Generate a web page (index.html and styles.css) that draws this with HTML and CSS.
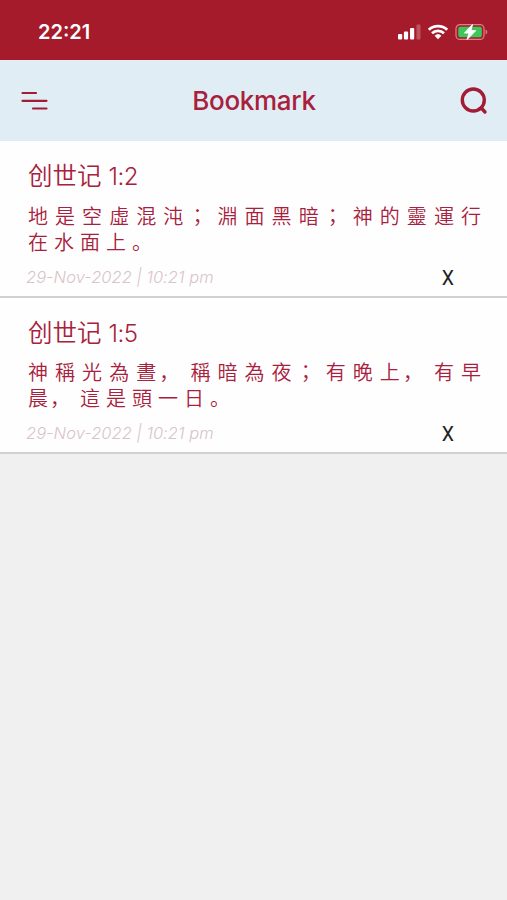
FILE: index.html
```html
<!DOCTYPE html>
<html lang="zh-Hans">
<head>
<meta charset="utf-8">
<title>Bookmark</title>
<link rel="stylesheet" href="styles.css">
</head>
<body>
<div class="status">
  <span class="time">22:21</span>
  <svg class="status-icons" width="92" height="20" viewBox="0 0 92 20">
    <g fill="#fff">
      <rect x="0" y="12" width="4.200" height="5.500" rx="1"/>
      <rect x="5.900" y="9.500" width="4.200" height="8" rx="1"/>
      <rect x="12" y="6" width="4.200" height="11.500" rx="1"/>
      <rect x="18.500" y="2.500" width="4" height="15" rx="1" opacity=".25"/>
      <path d="M36.600 13.700a5 5 0 0 1 6.800 0L40 17.300z"/>
    </g>
    <g fill="none" stroke="#fff" stroke-width="2.800">
      <path d="M30.800 7.700a13.500 13.500 0 0 1 18.400 0"/>
      <path d="M34 11.200a9 9 0 0 1 12 0"/>
    </g>
    <rect x="58" y="2.600" width="28" height="14.800" rx="4" fill="none" stroke="#d5838a" stroke-width="1.200"/>
    <path d="M87.600 7.500c2.200.8 2.200 4.200 0 5z" fill="#d5838a"/>
    <rect x="60.300" y="4.800" width="23.500" height="10.400" rx="2" fill="#3fc65a"/>
    <path d="M74.500 2.500l-8 8.500h4.600l-2 6.500 8.600-8.800h-4.800z" fill="#fff" stroke="#fff" stroke-width="1" stroke-linejoin="round"/>
  </svg>
</div>
<header class="header">
  <svg class="menu" width="28" height="20" viewBox="0 0 28 20" stroke="#a21c36" stroke-width="2.200" stroke-linecap="round">
    <path d="M2.500 2h13.500M2.500 9.800h24M13 17.500H26.500"/>
  </svg>
  <h1 class="title">Bookmark</h1>
  <svg class="search" width="28" height="28" viewBox="0 0 28 28" fill="none" stroke="#a21c36" stroke-width="3.400" stroke-linecap="round">
    <circle cx="13.300" cy="13" r="11"/>
    <path d="M21.300 21l3.700 4"/>
  </svg>
</header>
<main class="list">
  <article class="item">
    <h2 class="ref">创世记 <span class="num">1:2</span></h2>
    <p class="verse"><span class="full">地是空虛混<span class="before-mid">沌</span><span class="mid" lang="zh-Hant">；</span>淵面黑<span class="before-mid">暗</span><span class="mid" lang="zh-Hant">；</span>神的靈運行</span><span class="last">在水面上。</span></p>
    <div class="meta"><time class="date">29-Nov-2022 | 10:21 pm</time><span class="remove">X</span></div>
  </article>
  <article class="item">
    <h2 class="ref">创世记 <span class="num">1:5</span></h2>
    <p class="verse"><span class="full">神稱光為<span class="before-comma">晝</span><span class="comma">，</span>稱暗為<span class="before-mid">夜</span><span class="mid" lang="zh-Hant">；</span>有晚<span class="before-comma">上</span><span class="comma">，</span>有早</span><span class="last"><span class="before-comma">晨</span><span class="comma">，</span>這是頭一日。</span></p>
    <div class="meta"><time class="date">29-Nov-2022 | 10:21 pm</time><span class="remove">X</span></div>
  </article>
</main>
</body>
</html>
```
FILE: styles.css
```css
* { box-sizing: border-box; }
body {
  margin: 0;
  min-height: 900px;
  background: #f0f0f0;
  color: #a8203c;
  font-family: Inter, "Noto Sans CJK SC", sans-serif;
}
.status {
  height: 60px;
  padding: 3px 17px 0 38px;
  display: flex;
  align-items: center;
  justify-content: space-between;
  background: #a61b2b;
  color: #fff;
}
.time {
  font-size: 20px;
  font-weight: 600;
  line-height: 24px;
}
.status-icons { margin-top: 1px; }
.header {
  height: 81px;
  padding: 0 19px 0 20px;
  display: flex;
  align-items: center;
  justify-content: space-between;
  background: #e0edf5;
}
.title {
  margin: 0;
  font-size: 26px;
  font-weight: 460;
  line-height: 32px;
  letter-spacing: -0.300px;
}
.item {
  height: 156.500px;
  padding: 20px 26px 0 28px;
  background: #fefefe;
  border-bottom: 2px solid #d0d0d0;
}
.ref {
  margin: 0;
  font-size: 24.500px;
  font-weight: 350;
  line-height: 30px;
  white-space: pre;
}
.num { font-size: 24px; letter-spacing: -0.4px; }
.verse {
  --gap: 7.060px;
  margin: 10.500px 0 0;
  font-family: "Noto Sans CJK SC", sans-serif;
  font-size: 20px;
  font-weight: 350;
  line-height: 26px;
  white-space: nowrap;
}
.full, .last {
  display: block;
  letter-spacing: var(--gap);
}
.last { --gap: 6px; }
/* Each pair shares its spacing so the mark sits closer to the character before it. */
.before-mid { letter-spacing: calc(var(--gap) - 3px); }
.mid {
  letter-spacing: calc(var(--gap) + 3px);
  font-family: "Noto Sans CJK TC", sans-serif;
}
.before-comma { letter-spacing: calc(var(--gap) - 4px); }
.comma { letter-spacing: calc(var(--gap) + 4px); }
.meta {
  margin: 11px 27px 0 -2px;
  display: flex;
  align-items: flex-start;
  justify-content: space-between;
  line-height: 22px;
}
.date {
  font-size: 16.500px;
  font-style: italic;
  font-weight: 350;
  letter-spacing: 0.030px;
  color: #d9c3c9;
}
.remove {
  margin-top: 2px;
  font-family: Roboto, sans-serif;
  font-size: 19.500px;
  color: #222;
}
```
